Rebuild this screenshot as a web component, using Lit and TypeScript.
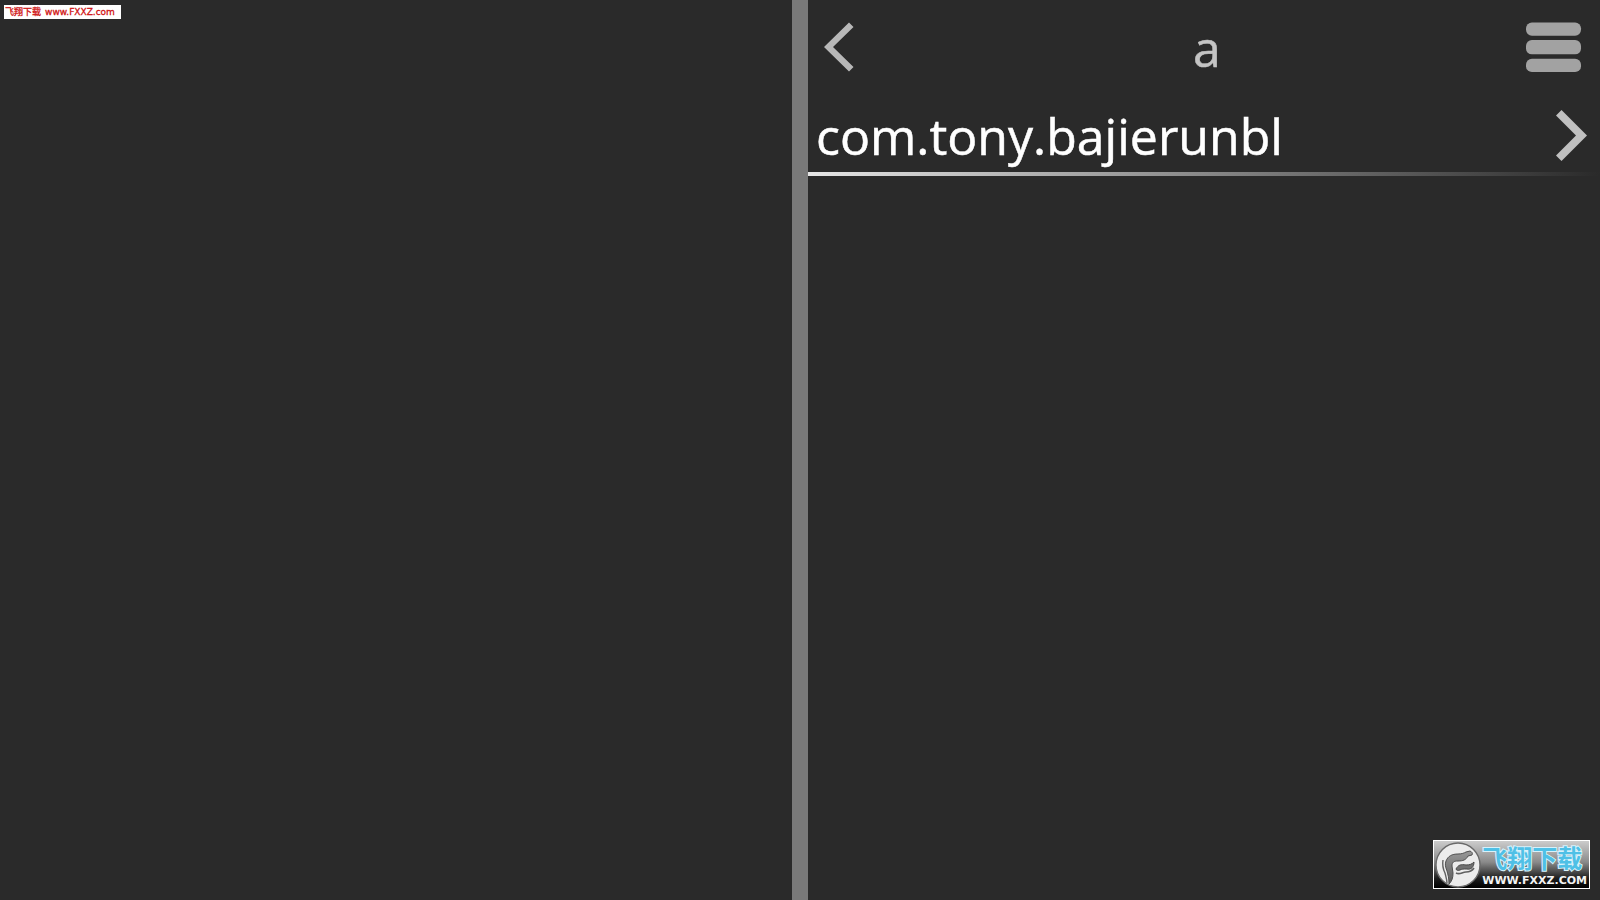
import { LitElement, html, css } from "lit";
import { customElement, property } from "lit/decorators.js";

@customElement("site-tag")
class SiteTag extends LitElement {
  static styles = css`
    :host { display: block; }
    .tag {
      display: flex;
      align-items: center;
      gap: 4px;
      height: 14px;
      padding: 0 6px 0 1px;
      background: #fff;
      color: #d01414;
      font: 9px/16px "DejaVu Sans", "Noto Sans CJK SC", sans-serif;
      text-decoration: none;
      white-space: nowrap;
      -webkit-text-stroke: 0.3px #d01414;
    }
  `;
  render() {
    return html`<a class="tag" href="#"><span lang="zh">飞翔下载</span><span>www.FXXZ.com</span></a>`;
  }
}

@customElement("site-badge")
class SiteBadge extends LitElement {
  static styles = css`
    :host { display: block; }
    .badge {
      box-sizing: border-box;
      display: flex;
      align-items: center;
      gap: 1px;
      height: 49px;
      padding: 0 2px 0 1px;
      border: 1px solid #fff;
      background: linear-gradient(#cccccc, #8a8a8a 45%, #1c1c1c 80%, #000);
      text-decoration: none;
      white-space: nowrap;
    }
    .emblem { width: 46px; height: 46px; flex: none; }
    .words { display: flex; flex-direction: column; }
    .name {
      font: 700 25px/33px "Noto Sans CJK SC", sans-serif;
      color: #4fc0e6;
      -webkit-text-stroke: 2px #d8f2fb;
      paint-order: stroke fill;
    }
    .site {
      font: bold 11px/14px "DejaVu Sans", sans-serif;
      color: #f4f4f4;
    }
  `;
  render() {
    return html`
      <a class="badge" href="#">
        <svg class="emblem" viewBox="0 0 46 46" aria-hidden="true">
          <defs>
            <linearGradient id="body" x1="0" y1="0" x2="0" y2="1">
              <stop offset="0" stop-color="#999" />
              <stop offset="1" stop-color="#5c5c5c" />
            </linearGradient>
          </defs>
          <circle cx="23" cy="23" r="22" fill="#ececec" stroke="#6a6a6a" stroke-width="1.4" />
          <path d="M11 19c2-5 6-7 12-7 4 0 6-1 8-2l4-1c2 1 3 2 2 4l-4 1c-2 4-5 5-10 5-4 0-6 1-6 5l1 7c0 5-1 8-4 11 0-6-1-9-2-13-2-5-2-7-1-10Z" fill="url(#body)" stroke="#505050" />
          <path d="M8 18c-1 6 0 9 2 13 1 4 2 7 2 10" fill="none" stroke="#606060" stroke-width="1.4" />
          <path d="M21 27c2-4 5-5 10-4 4 0 6-1 8-3 0 5-3 8-7 7-4 0-5 0-7 1-2 1-4 0-4-1Z" fill="#707070" stroke="#484848" />
          <path d="M21 31c4 2 6-1 10-1s6-1 8-4" fill="none" stroke="#606060" stroke-width="1.6" />
        </svg>
        <span class="words">
          <span class="name" lang="zh">飞翔下载</span>
          <span class="site">WWW.FXXZ.COM</span>
        </span>
      </a>`;
  }
}

@customElement("app-root")
class AppRoot extends LitElement {
  @property() heading = "a";
  @property({ attribute: false }) entries = ["com.tony.bajierunbl"];

  static styles = css`
    :host {
      display: block;
      min-height: 100vh;
      background: #2a2a2a;
      font-family: "Open Sans", "Noto Sans", sans-serif;
    }
    .split {
      display: grid;
      grid-template-columns: 1fr 16px 1fr;
      min-height: 100vh;
    }
    .divider { background: #797979; }
    .bar {
      display: grid;
      grid-template-columns: 80px 1fr 74px;
      align-items: center;
      height: 94px;
      margin-bottom: 6px;
    }
    button {
      display: flex;
      border: 0;
      margin: 0;
      padding: 0;
      background: none;
      font: inherit;
      cursor: pointer;
    }
    .back { padding-left: 16px; }
    .menu { justify-content: flex-end; padding-right: 18px; }
    h1 {
      margin: 0;
      padding-top: 2px;
      font-size: 50px;
      line-height: 64px;
      font-weight: 400;
      text-align: center;
      color: #c4c4c4;
      -webkit-text-stroke: 0.5px #c4c4c4;
    }
    ul { margin: 0; padding: 0; list-style: none; }
    .row {
      width: 100%;
      height: 72px;
      align-items: center;
      justify-content: space-between;
      padding: 0 12px 0 8px;
      color: #fff;
      font-size: 50px;
      line-height: 72px;
      -webkit-text-stroke: 0.5px #fff;
    }
    .rule {
      height: 4px;
      background: linear-gradient(to right, #e6e6e6, #2a2a2a);
    }
    .top-left { position: absolute; left: 4px; top: 5px; }
    .bottom-right { position: absolute; right: 10px; bottom: 11px; }
  `;

  render() {
    return html`
      <div class="split">
        <section></section>
        <div class="divider"></div>
        <main>
          <header class="bar">
            <button class="back" aria-label="Back">
              <svg width="30" height="50" viewBox="0 0 30 50"><path d="M0 25 25 0.5 29.5 5 9 25 29.5 45 25 49.5Z" fill="#b8b8b8" /></svg>
            </button>
            <h1>${this.heading}</h1>
            <button class="menu" aria-label="Menu">
              <svg width="57" height="52" viewBox="0 0 57 52" fill="#a2a2a2">
                <rect x="0" y="1" width="56" height="13.5" rx="6" />
                <rect x="0" y="19" width="56" height="14.5" rx="6" />
                <rect x="0" y="38" width="56" height="13.5" rx="6" />
              </svg>
            </button>
          </header>
          <ul>
            ${this.entries.map(
              (entry) => html`<li>
                <button class="row">
                  <span>${entry}</span>
                  <svg width="32" height="52" viewBox="0 0 32 52"><path d="M31 25.5 5.5 0 0 5.5 20 25.5 0 45.5 5.5 51Z" fill="#c0c0c0" /></svg>
                </button>
                <div class="rule"></div>
              </li>`
            )}
          </ul>
        </main>
      </div>
      <site-tag class="top-left"></site-tag>
      <site-badge class="bottom-right"></site-badge>
    `;
  }
}
